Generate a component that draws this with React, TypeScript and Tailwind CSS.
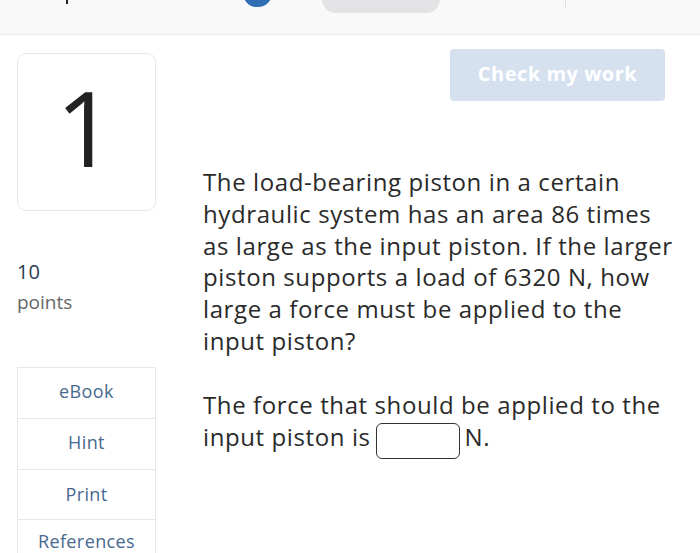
import React from "react";

export default function App() {
  const font = { fontFamily: "'Open Sans', 'Liberation Sans', sans-serif" };
  return (
    <div className="w-[700px] h-[553px] overflow-hidden bg-white" style={font}>
      <div className="h-[35px] bg-[#f9f9f9] border-b border-[#ececec] flex items-start overflow-hidden">
        <div className="ml-[66px] w-[2px] h-[4px] bg-[#222]" />
        <div className="ml-[175px] mt-[-21px] w-[29px] h-[28px] rounded-full bg-[#2f6db5]" />
        <div className="ml-[50px] mt-[-20px] w-[118px] h-[33px] rounded-[14px] bg-[#e3e3e5]" />
        <div className="ml-[125px] w-px h-[9px] bg-[#e0e0e0]" />
      </div>
      <div className="flex pl-[17px] pt-[14px]">
        <div className="w-[139px] flex flex-col">
          <div className="mt-[4px] h-[158px] border border-[#e6e6e6] rounded-[9px] flex items-center justify-center">
            <span className="text-[104px] leading-none text-[#222] mt-[-10px] mr-[2px]">1</span>
          </div>
          <div className="mt-[49px] text-[20px] leading-[24px] text-[#2b3b52]">10</div>
          <div className="mt-[6px] text-[19px] leading-[24px] text-[#666]">points</div>
          <div className="mt-[53px] border border-[#e8e8e8] text-[#47698f] text-[18px] tracking-[0.4px]">
            <div className="h-[51px] pb-[3px] flex items-center justify-center border-b border-[#e8e8e8]">eBook</div>
            <div className="h-[51px] pb-[3px] flex items-center justify-center border-b border-[#e8e8e8]">Hint</div>
            <div className="h-[50px] flex items-center justify-center border-b border-[#e8e8e8]">Print</div>
            <div className="h-[45px] pb-[3px] flex items-center justify-center">References</div>
          </div>
        </div>
        <div className="ml-[47px] w-[470px] flex flex-col">
          <div className="flex justify-end pr-[8px]">
            <div className="w-[215px] h-[52px] rounded-[4px] bg-[#d5e1ef] text-white text-[20px] font-bold tracking-[0.5px] flex items-center justify-center pb-[2px]">
              Check my work
            </div>
          </div>
          <div className="mt-[65px] text-[24px] leading-[31.8px] tracking-[0.6px] text-[#2a2a2a] whitespace-nowrap">
            The load-bearing piston in a certain
            <br />
            hydraulic system has an area 86 times
            <br />
            as large as the input piston. If the larger
            <br />
            piston supports a load of 6320 N, how
            <br />
            large a force must be applied to the
            <br />
            input piston?
          </div>
          <div className="mt-[32px] text-[24px] leading-[32px] tracking-[0.6px] text-[#2a2a2a] whitespace-nowrap">
            The force that should be applied to the
            <br />
            input piston is
            <span className="inline-block align-middle w-[84px] h-[36px] border-[1.5px] border-[#333] rounded-[6px] mt-[2px] ml-[5px] mr-[5px]" />
            N.
          </div>
        </div>
      </div>
    </div>
  );
}
